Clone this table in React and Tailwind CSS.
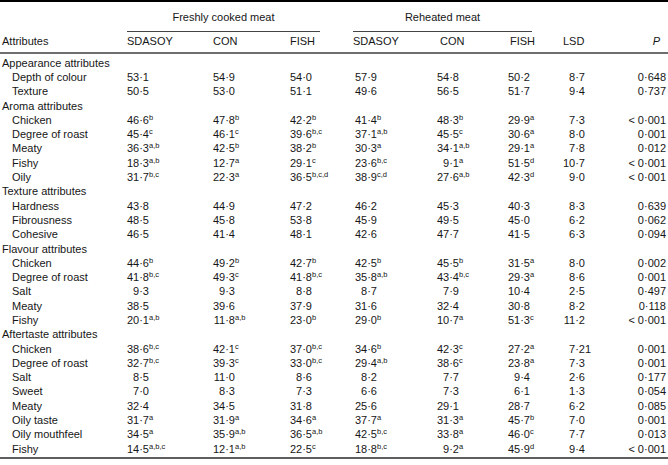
import React from 'react'

// Sensory attribute scores for freshly cooked and reheated meat
const sections = [
	{
		title: 'Appearance attributes',
		rows: [
			['Depth of colour', '53.1', '54.9', '54.0', '57.9', '54.8', '50.2', '8.7', '0.648'],
			['Texture', '50.5', '53.0', '51.1', '49.6', '56.5', '51.7', '9.4', '0.737'],
		],
	},
	{
		title: 'Aroma attributes',
		rows: [
			['Chicken', '46.6|b', '47.8|b', '42.2|b', '41.4|b', '48.3|b', '29.9|a', '7.3', '<0.001'],
			['Degree of roast', '45.4|c', '46.1|c', '39.6|b,c', '37.1|a,b', '45.5|c', '30.6|a', '8.0', '0.001'],
			['Meaty', '36.3|a,b', '42.5|b', '38.2|b', '30.3|a', '34.1|a,b', '29.1|a', '7.8', '0.012'],
			['Fishy', '18.3|a,b', '12.7|a', '29.1|c', '23.6|b,c', '9.1|a', '51.5|d', '10.7', '<0.001'],
			['Oily', '31.7|b,c', '22.3|a', '36.5|b,c,d', '38.9|c,d', '27.6|a,b', '42.3|d', '9.0', '<0.001'],
		],
	},
	{
		title: 'Texture attributes',
		rows: [
			['Hardness', '43.8', '44.9', '47.2', '46.2', '45.3', '40.3', '8.3', '0.639'],
			['Fibrousness', '48.5', '45.8', '53.8', '45.9', '49.5', '45.0', '6.2', '0.062'],
			['Cohesive', '46.5', '41.4', '48.1', '42.6', '47.7', '41.5', '6.3', '0.094'],
		],
	},
	{
		title: 'Flavour attributes',
		rows: [
			['Chicken', '44.6|b', '49.2|b', '42.7|b', '42.5|b', '45.5|b', '31.5|a', '8.0', '0.002'],
			['Degree of roast', '41.8|b,c', '49.3|c', '41.8|b,c', '35.8|a,b', '43.4|b,c', '29.3|a', '8.6', '0.001'],
			['Salt', '9.3', '9.3', '8.8', '8.7', '7.9', '10.4', '2.5', '0.497'],
			['Meaty', '38.5', '39.6', '37.9', '31.6', '32.4', '30.8', '8.2', '0.118'],
			['Fishy', '20.1|a,b', '11.8|a,b', '23.0|b', '29.0|b', '10.7|a', '51.3|c', '11.2', '<0.001'],
		],
	},
	{
		title: 'Aftertaste attributes',
		rows: [
			['Chicken', '38.6|b,c', '42.1|c', '37.0|b,c', '34.6|b', '42.3|c', '27.2|a', '7.21', '0.001'],
			['Degree of roast', '32.7|b,c', '39.3|c', '33.0|b,c', '29.4|a,b', '38.6|c', '23.8|a', '7.3', '0.001'],
			['Salt', '8.5', '11.0', '8.6', '8.2', '7.7', '9.4', '2.6', '0.177'],
			['Sweet', '7.0', '8.3', '7.3', '6.6', '7.3', '6.1', '1.3', '0.054'],
			['Meaty', '32.4', '34.5', '31.8', '25.6', '29.1', '28.7', '6.2', '0.085'],
			['Oily taste', '31.7|a', '31.9|a', '34.6|a', '37.7|a', '31.3|a', '45.7|b', '7.0', '0.001'],
			['Oily mouthfeel', '34.5|a', '35.9|a,b', '36.5|a,b', '42.5|b,c', '33.8|a', '46.0|c', '7.7', '0.013'],
			['Fishy', '14.5|a,b,c', '12.1|a,b', '22.5|c', '18.8|b,c', '9.2|a', '45.9|d', '9.4', '<0.001'],
		],
	},
]

const grid = 'grid grid-cols-[127px_86px_77px_63px_84px_71px_55px_57px_1fr]'

// number aligned on its decimal point, with optional superscript letters
const Num = ({ value }) => {
	const [num, sup] = value.split('|')
	const [int, dec] = num.split('.')
	return (
		<span className="whitespace-nowrap">
			<span className="inline-block w-[12.2px] text-right">{int}</span>
			<span>·{dec}</span>
			{sup && <span className="relative -top-[4px] text-[7.5px] leading-none">{sup}</span>}
		</span>
	)
}

const PValue = ({ value }) => {
	const less = value.startsWith('<')
	const num = less ? value.slice(1) : value
	return (
		<span className="whitespace-nowrap">
			{less && <span className="mr-[3px]">&lt;</span>}
			{num.replace('.', '·')}
		</span>
	)
}

export default function App() {
	return (
		<div className="w-[668px] h-[465px] bg-white text-[#161616] text-[11px] leading-none font-['Liberation_Sans',Arial,sans-serif]">
			<div className="border-t-2 border-black">
				{/* header */}
				<div className={`${grid} h-[30px]`}>
					<div />
					<div className="col-span-3 mr-[33px] flex items-center justify-center border-b border-[#444] pt-[1px]">
						Freshly cooked meat
					</div>
					<div className="col-span-3 mr-[31px] flex items-center justify-center border-b border-[#444] pt-[1px]">
						Reheated meat
					</div>
					<div />
					<div />
				</div>
				<div className={`${grid} h-[22px] items-center border-b-2 border-[#6e6e6e] pb-[1px]`}>
					<div className="pl-[2px]">Attributes</div>
					<div>SDASOY</div>
					<div>CON</div>
					<div>FISH</div>
					<div>SDASOY</div>
					<div className="pl-[3px]">CON</div>
					<div className="pl-[2px]">FISH</div>
					<div>LSD</div>
					<div className="text-right pr-[8px] italic">P</div>
				</div>

				{/* body */}
				<div className="pt-[2px] pb-[1px] border-b-2 border-[#5e5e5e]">
					{sections.map((section) => (
						<div key={section.title}>
							<div className="h-[14.3px] flex items-center pl-[2px]">{section.title}</div>
							{section.rows.map((row, i) => (
								<div key={i} className={`${grid} h-[14.3px] items-center`}>
									<div className="pl-[12px]">{row[0]}</div>
									{row.slice(1, 8).map((v, j) => (
										<div key={j} className={j === 3 ? 'pl-[2px]' : ''}>
											<Num value={v} />
										</div>
									))}
									<div className="text-right pr-[2px]">
										<PValue value={row[8]} />
									</div>
								</div>
							))}
						</div>
					))}
				</div>
			</div>
		</div>
	)
}
